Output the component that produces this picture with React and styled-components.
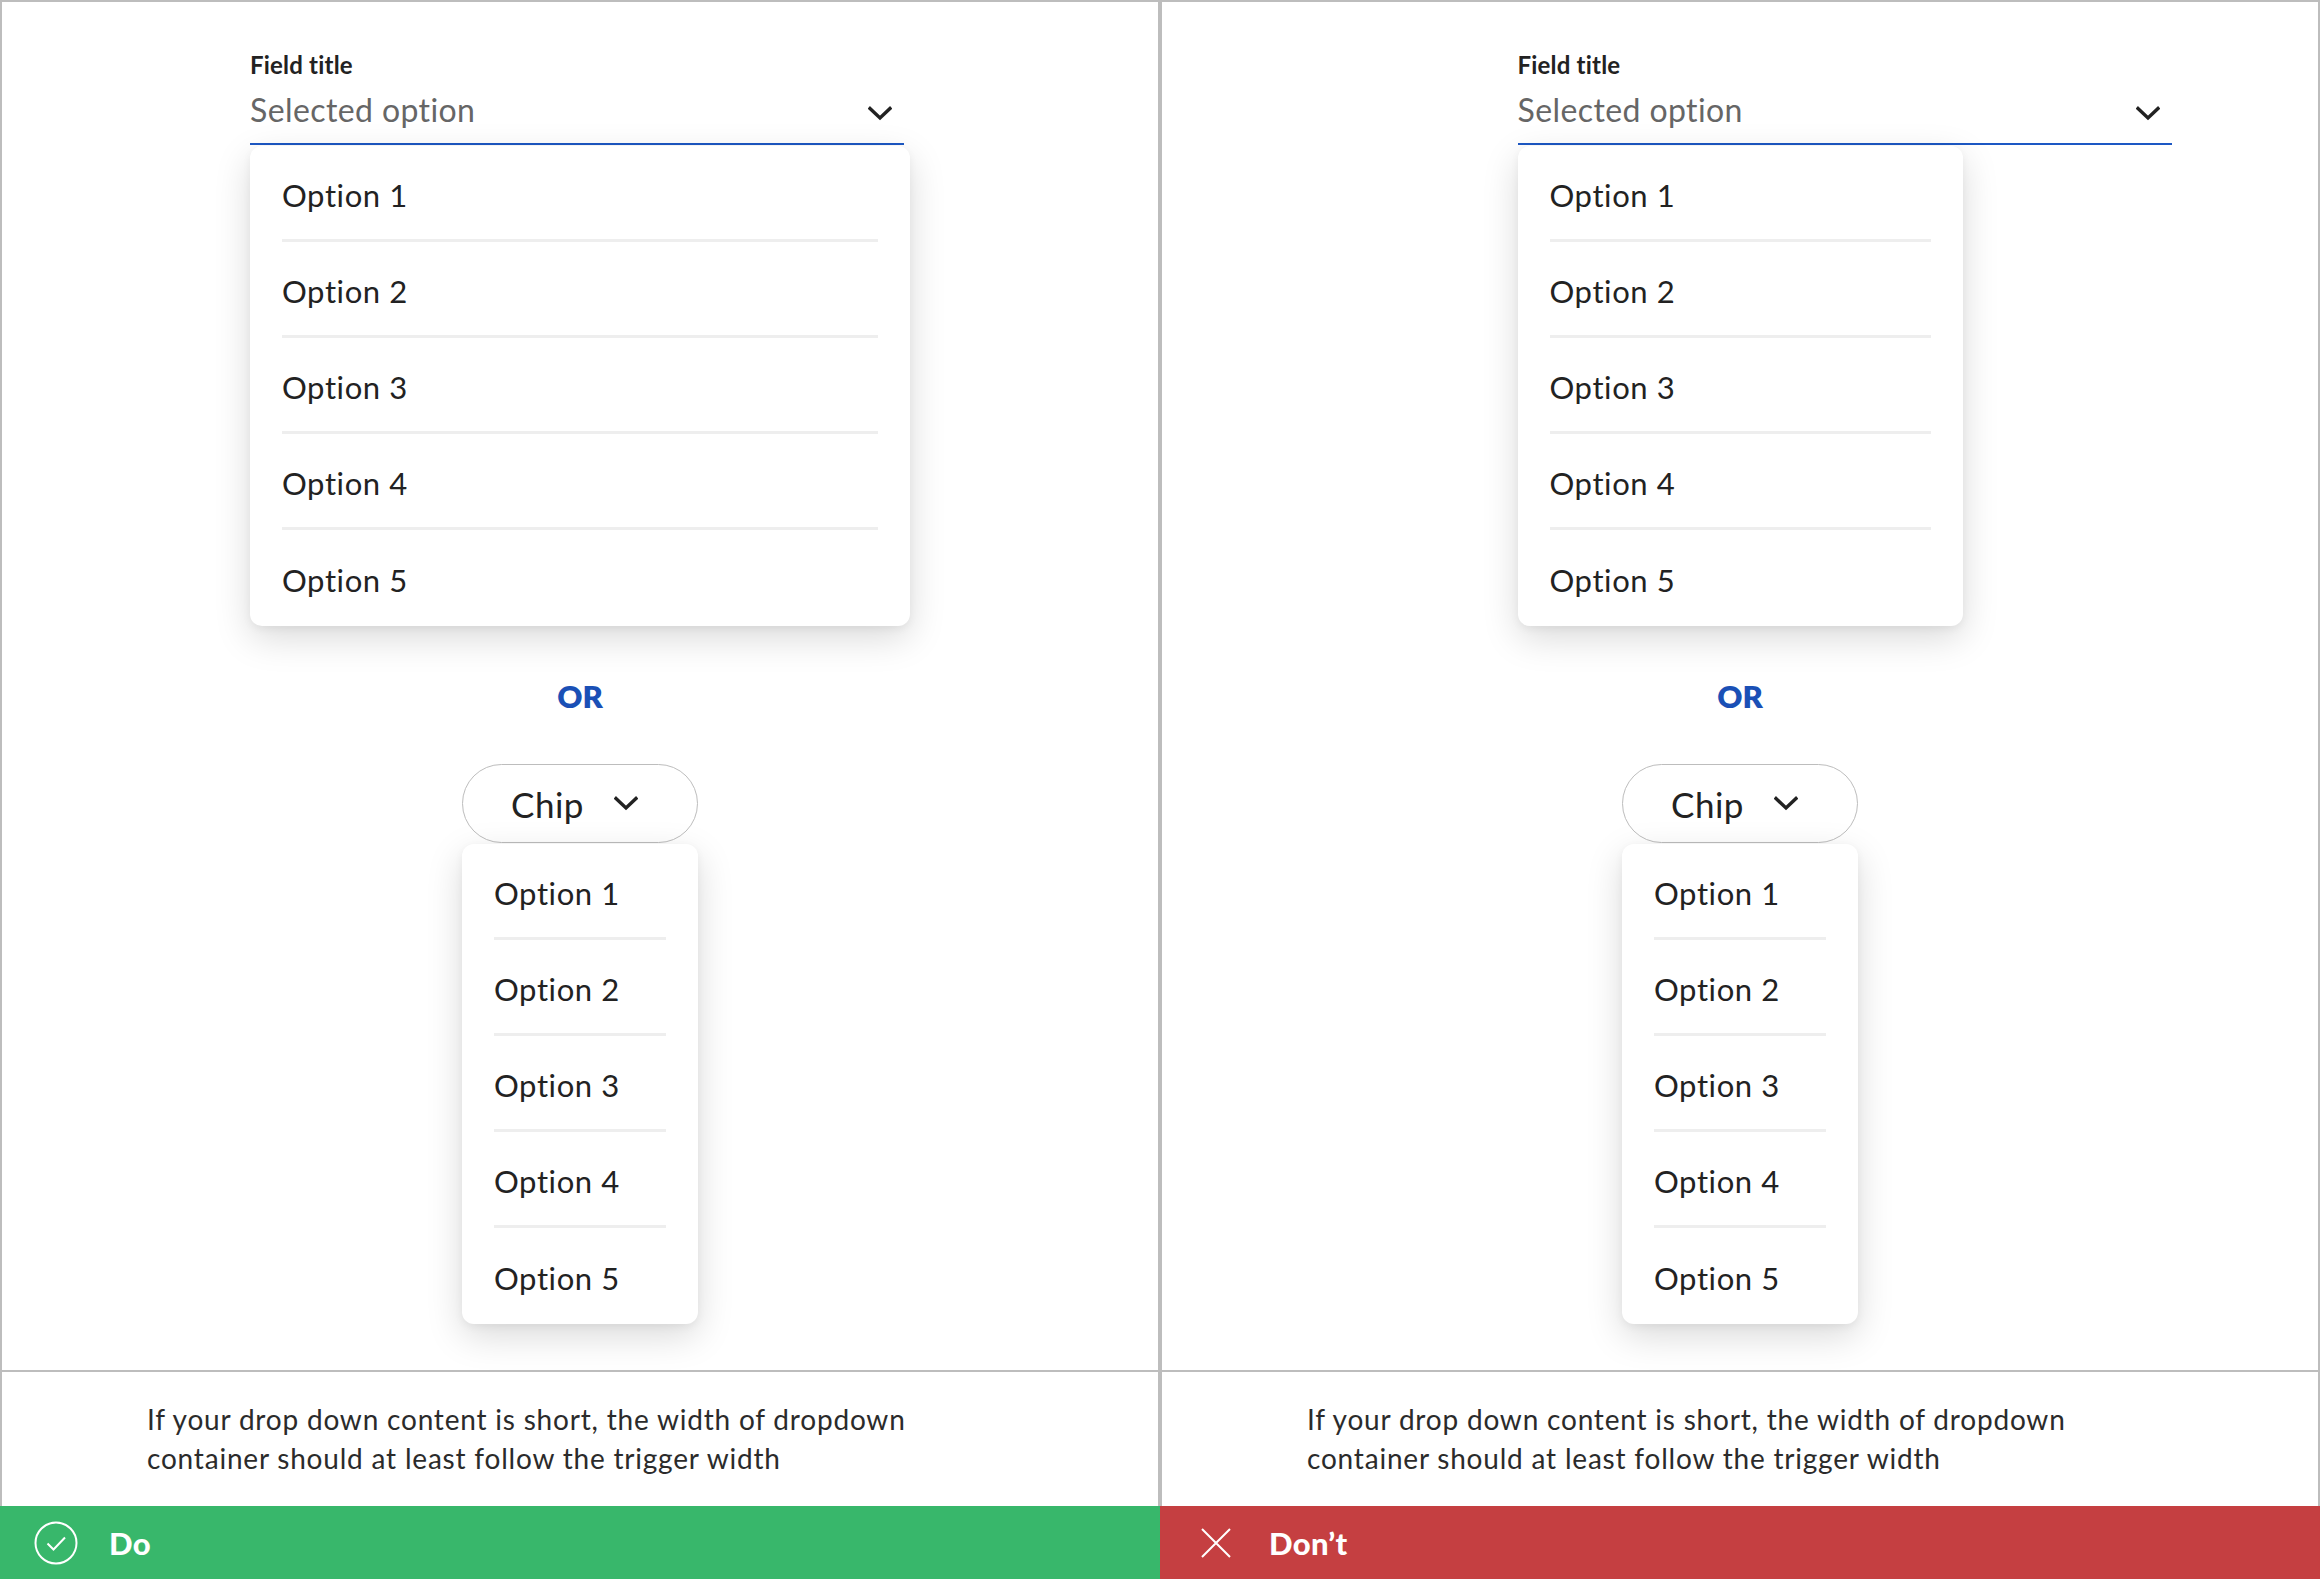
import styled, { createGlobalStyle } from 'styled-components';

const GlobalStyle = createGlobalStyle`
  * { box-sizing: border-box; }
  body {
    margin: 0;
    background: #fff;
    font-family: Lato, "Noto Sans", sans-serif;
    color: #222;
  }
`;

const Page = styled.div`
  display: flex;
  width: 2320px;
  height: 1579px;
`;

const Panel = styled.div`
  display: flex;
  flex-direction: column;
  width: 1160px;
`;

const Body = styled.div`
  border: 2px solid #bdbdbd;
  border-bottom: none;
  display: flex;
  flex-direction: column;
`;

const Demo = styled.div`
  height: 1370px;
  border-bottom: 2px solid #bdbdbd;
  padding-top: 48px;
  display: flex;
  flex-direction: column;
  align-items: center;
`;

const Group = styled.div`
  width: ${p => p.$width}px;
  display: flex;
  flex-direction: column;
`;

const Field = styled.div`
  width: 654px;
  display: flex;
  flex-direction: column;
`;

const Label = styled.div`
  font-size: 24px;
  line-height: 29px;
  font-weight: 700;
  letter-spacing: 0.2px;
  color: #222;
`;

const Select = styled.div`
  margin-top: 12px;
  padding: 0 12px 14px 0;
  border-bottom: 2px solid #1d58c4;
  display: flex;
  align-items: center;
  justify-content: space-between;
  font-size: 32px;
  line-height: 38px;
  letter-spacing: 0.4px;
  color: #666;

  svg {
    margin-top: 6px;
  }
`;

const Menu = styled.div`
  margin-top: 1px;
  width: ${p => p.$width}px;
  background: #fff;
  border-radius: 12px;
  box-shadow: 0 12px 36px rgba(0, 0, 0, 0.15), 0 3px 8px rgba(0, 0, 0, 0.05);
  display: flex;
  flex-direction: column;
`;

const Option = styled.div`
  margin: 0 32px;
  height: 96px;
  display: flex;
  align-items: center;
  font-size: 31px;
  line-height: 37px;
  letter-spacing: 0.6px;
  color: #222;
  border-bottom: 3px solid #eeeeee;
  padding-top: 6px;

  &:last-child {
    border-bottom: none;
    padding-top: 4px;
  }
`;

const Or = styled.div`
  margin-top: 52px;
  font-size: 31px;
  line-height: 37px;
  font-weight: 800;
  color: #1a50b6;
`;

const ChipGroup = styled.div`
  margin-top: 49px;
  width: 236px;
  display: flex;
  flex-direction: column;
`;

const Chip = styled.div`
  height: 79px;
  border: 1.5px solid #bdbdbd;
  border-radius: 40px;
  display: flex;
  align-items: center;
  gap: 30px;
  padding-left: 48px;
  font-size: 35px;
  line-height: 42px;
  letter-spacing: 0.5px;
  color: #222;
`;

const Caption = styled.div`
  height: 134px;
  padding: 28px 0 0 145px;
  font-size: 28px;
  line-height: 39px;
  letter-spacing: 0.8px;
  color: #2b2b2b;
  width: 990px;
`;

const Banner = styled.div`
  height: 73px;
  background: ${p => (p.$good ? '#38b76b' : '#c53f41')};
  display: flex;
  align-items: center;
  gap: 31px;
  padding-left: 34px;
  color: #fff;
  font-size: 31px;
  font-weight: 900;
  letter-spacing: 0.3px;
`;

const IconBox = styled.span`
  width: 44px;
  height: 44px;
  display: flex;
  align-items: center;
  justify-content: center;
`;

const Chevron = () => (
  <svg width="24" height="15" viewBox="0 0 24 15" fill="none">
    <path d="M2 2.5 L12 12 L22 2.5" stroke="#222" strokeWidth="3.4" strokeLinecap="square" />
  </svg>
);

const CheckCircle = () => (
  <svg width="44" height="44" viewBox="0 0 44 44" fill="none">
    <circle cx="22" cy="22" r="20.5" stroke="#fff" strokeWidth="2" />
    <path d="M13.5 22.5 L19.5 28.5 L31 16.5" stroke="#fff" strokeWidth="2" />
  </svg>
);

const Cross = () => (
  <svg width="30" height="30" viewBox="0 0 30 30" fill="none">
    <path d="M1 1 L29 29 M29 1 L1 29" stroke="#fff" strokeWidth="2" />
  </svg>
);

const options = ['Option 1', 'Option 2', 'Option 3', 'Option 4', 'Option 5'];

const OptionList = ({ width }) => (
  <Menu $width={width}>
    {options.map(o => (
      <Option key={o}>{o}</Option>
    ))}
  </Menu>
);

const Example = ({ good, menuWidth }) => (
  <Panel>
    <Body>
      <Demo>
        <Group $width={menuWidth}>
          <Field>
            <Label>Field title</Label>
            <Select>
              <span>Selected option</span>
              <Chevron />
            </Select>
          </Field>
          <OptionList width={menuWidth} />
        </Group>
        <Or>OR</Or>
        <ChipGroup>
          <Chip>
            <span>Chip</span>
            <Chevron />
          </Chip>
          <OptionList width={236} />
        </ChipGroup>
      </Demo>
      <Caption>
        If your drop down content is short, the width of dropdown container should at least follow the trigger width
      </Caption>
    </Body>
    <Banner $good={good}>
      <IconBox>{good ? <CheckCircle /> : <Cross />}</IconBox>
      <span>{good ? 'Do' : 'Don\u2019t'}</span>
    </Banner>
  </Panel>
);

export default function App() {
  return (
    <>
      <GlobalStyle />
      <Page>
        <Example good menuWidth={660} />
        <Example menuWidth={445} />
      </Page>
    </>
  );
}
